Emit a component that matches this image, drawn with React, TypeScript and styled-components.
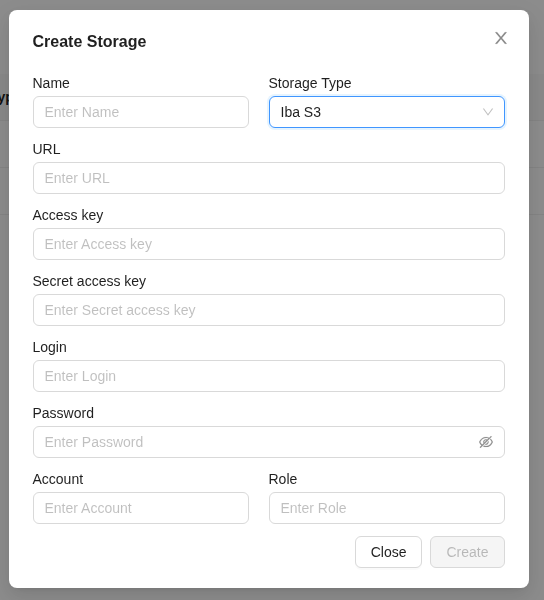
import React from "react";
import styled, { createGlobalStyle, css } from "styled-components";
import { AiOutlineEyeInvisible } from "react-icons/ai";

const GlobalStyle = createGlobalStyle`
  *, *::before, *::after { box-sizing: border-box; }
  body {
    margin: 0;
    overflow: hidden;
    background: #fff;
    color: rgba(0, 0, 0, 0.88);
    font: 14px/22px "Liberation Sans", Arial, sans-serif;
  }
`;

const Page = styled.div`
  height: 600px;
  padding-top: 74px;
  overflow: hidden;
`;

const TableHead = styled.div`
  height: 47px;
  padding: 12px 0;
  background: #fafafa;
  border-bottom: 1px solid #f0f0f0;
  font-weight: 700;
  white-space: nowrap;
`;

const HeadCell = styled.span`
  display: block;
  margin-left: -10px;
`;

const TableRow = styled.div`
  height: 47px;
  border-bottom: 1px solid #f0f0f0;
`;

const Mask = styled.div`
  position: fixed;
  inset: 0;
  padding: 10px 8.5px;
  background: rgba(0, 0, 0, 0.45);
`;

const Dialog = styled.section`
  position: relative;
  width: 520px;
  height: 578px;
  padding: 20px 24px;
  background: #fff;
  border-radius: 8px;
  box-shadow: 0 6px 16px 0 rgba(0, 0, 0, 0.08), 0 3px 6px -4px rgba(0, 0, 0, 0.12),
    0 9px 28px 8px rgba(0, 0, 0, 0.05);
`;

const Title = styled.h2`
  margin: 0 0 18px;
  font-size: 16px;
  line-height: 24px;
  font-weight: 700;
`;

const CloseIcon = styled.button`
  position: absolute;
  top: 17px;
  right: 17px;
  display: flex;
  align-items: center;
  justify-content: center;
  width: 22px;
  height: 22px;
  padding: 0;
  border: 0;
  background: none;
  color: rgba(0, 0, 0, 0.45);
`;

const Form = styled.form`
  display: flex;
  flex-direction: column;
  gap: 10px;
`;

const Columns = styled.div`
  display: grid;
  grid-template-columns: 216px 236px;
  gap: 20px;
`;

const FieldBox = styled.div`
  display: flex;
  flex-direction: column;
  gap: 2px;
`;

const Label = styled.label`
  height: 22px;
`;

const Control = styled.div<{ $active?: boolean }>`
  display: flex;
  align-items: center;
  height: 32px;
  padding: 0 11px;
  background: #fff;
  border: 1px solid #d9d9d9;
  border-radius: 6px;
  ${(p) =>
    p.$active &&
    css`
      padding-right: 10px;
      border-color: #4096ff;
      box-shadow: 0 0 0 2px rgba(5, 145, 255, 0.1);
    `}
`;

const Input = styled.input`
  flex: 1;
  min-width: 0;
  height: 22px;
  padding: 0;
  border: 0;
  outline: 0;
  background: none;
  color: inherit;
  font: inherit;
  &::placeholder {
    color: rgba(0, 0, 0, 0.25);
    opacity: 1;
  }
`;

const SelectValue = styled.span`
  flex: 1;
`;

const Glyph = styled.svg<{ $size: number; $weight?: number }>`
  width: ${(p) => p.$size}px;
  height: ${(p) => p.$size}px;
  fill: currentColor;
  stroke: currentColor;
  stroke-width: ${(p) => p.$weight ?? 0};
`;

const Arrow = styled.span`
  display: flex;
  color: rgba(0, 0, 0, 0.25);
`;

const Eye = styled(AiOutlineEyeInvisible)`
  width: 14px;
  height: 14px;
  color: rgba(0, 0, 0, 0.42);
  stroke-width: 8;
`;

const Footer = styled.footer`
  display: flex;
  justify-content: flex-end;
  gap: 8px;
  margin-top: 12px;
`;

const Button = styled.button`
  height: 32px;
  padding: 0 15px;
  background: #fff;
  border: 1px solid #d9d9d9;
  border-radius: 6px;
  box-shadow: 0 2px 0 rgba(0, 0, 0, 0.02);
  color: rgba(0, 0, 0, 0.88);
  font: inherit;
  &:disabled {
    background: rgba(0, 0, 0, 0.04);
    box-shadow: none;
    color: rgba(0, 0, 0, 0.25);
  }
`;

function Field({ label, children }: { label: string; children?: React.ReactNode }) {
  return (
    <FieldBox>
      <Label>{label}</Label>
      {children ?? (
        <Control>
          <Input placeholder={`Enter ${label}`} />
        </Control>
      )}
    </FieldBox>
  );
}

export default function App() {
  return (
    <>
      <GlobalStyle />
      <Page>
        <TableHead>
          <HeadCell>Type</HeadCell>
        </TableHead>
        <TableRow />
        <TableRow />
      </Page>
      <Mask>
        <Dialog role="dialog" aria-label="Create Storage">
          <Title>Create Storage</Title>
          <CloseIcon aria-label="Close dialog">
            <Glyph $size={16} $weight={12} viewBox="64 64 896 896">
              <path d="M563.8 512l262.5-312.9c4.4-5.2.7-13.1-6.1-13.1h-79.8c-4.7 0-9.2 2.1-12.3 5.7L511.6 449.8 295.1 191.7c-3-3.6-7.5-5.7-12.3-5.7H203c-6.8 0-10.5 7.9-6.1 13.1L459.4 512 196.9 824.9A7.95 7.95 0 0 0 203 838h79.8c4.7 0 9.2-2.1 12.3-5.7l216.5-258.1 216.5 258.1c3 3.6 7.5 5.7 12.3 5.7h79.8c6.8 0 10.5-7.9 6.1-13.1L563.8 512z" />
            </Glyph>
          </CloseIcon>
          <Form>
            <Columns>
              <Field label="Name" />
              <Field label="Storage Type">
                <Control $active>
                  <SelectValue>Iba S3</SelectValue>
                  <Arrow>
                    <Glyph $size={12} viewBox="64 64 896 896">
                      <path d="M884 256h-75c-5.1 0-9.9 2.5-12.9 6.6L512 654.2 227.9 262.6c-3-4.1-7.8-6.6-12.9-6.6h-75c-6.5 0-10.3 7.4-6.5 12.7l352.6 486.1c12.8 17.6 39 17.6 51.7 0l352.6-486.1c3.9-5.3.1-12.7-6.4-12.7z" />
                    </Glyph>
                  </Arrow>
                </Control>
              </Field>
            </Columns>
            <Field label="URL" />
            <Field label="Access key" />
            <Field label="Secret access key" />
            <Field label="Login" />
            <Field label="Password">
              <Control>
                <Input type="password" placeholder="Enter Password" />
                <Eye viewBox="64 64 896 896" />
              </Control>
            </Field>
            <Columns>
              <Field label="Account" />
              <Field label="Role" />
            </Columns>
          </Form>
          <Footer>
            <Button>Close</Button>
            <Button disabled>Create</Button>
          </Footer>
        </Dialog>
      </Mask>
    </>
  );
}
